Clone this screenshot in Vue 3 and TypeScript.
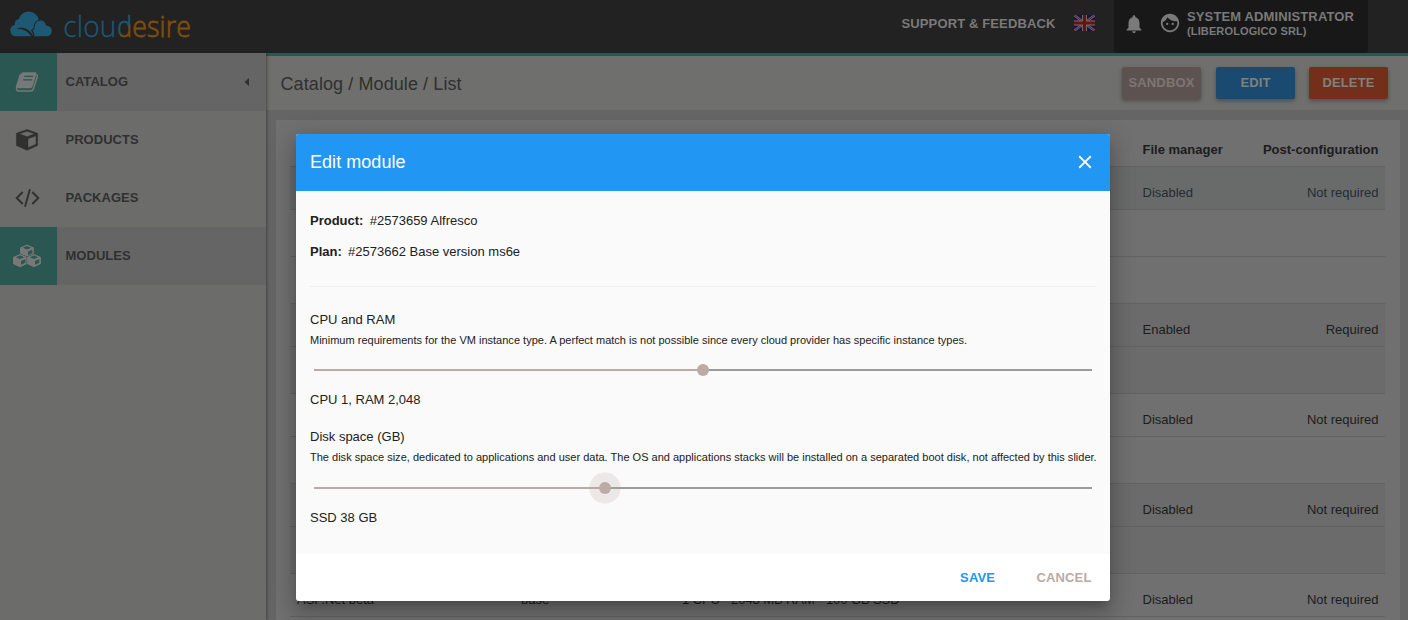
<script setup lang="ts">
import { computed, ref } from 'vue'

interface NavItem { label: string; icon: string; active: boolean; parent?: boolean }
interface Row { kind: 'main' | 'extra'; tone: string; cells?: string[] }
interface Slider { title: string; hint: string; value: string; percent: number; focused: boolean }

const nav: NavItem[] = [
  { label: 'CATALOG', icon: 'book', active: true, parent: true },
  { label: 'PRODUCTS', icon: 'cube', active: false },
  { label: 'PACKAGES', icon: 'code', active: false },
  { label: 'MODULES', icon: 'cubes', active: true },
]

const rows: Row[] = [
  { kind: 'main', tone: 'selected', cells: ['', '', '', 'Disabled', 'Not required'] },
  { kind: 'extra', tone: 'plain' },
  { kind: 'extra', tone: 'plain' },
  { kind: 'main', tone: 'striped', cells: ['', '', '', 'Enabled', 'Required'] },
  { kind: 'extra', tone: 'striped' },
  { kind: 'main', tone: 'plain', cells: ['', '', '', 'Disabled', 'Not required'] },
  { kind: 'extra', tone: 'plain' },
  { kind: 'main', tone: 'striped', cells: ['', '', '', 'Disabled', 'Not required'] },
  { kind: 'extra', tone: 'striped' },
  { kind: 'main', tone: 'plain', cells: ['ASP.Net beta', 'base', '1 CPU - 2048 MB RAM - 100 GB SSD', 'Disabled', 'Not required'] },
  { kind: 'extra', tone: 'plain' },
]

const open = ref(true)
const sliders = ref<Slider[]>([
  {
    title: 'CPU and RAM',
    hint: 'Minimum requirements for the VM instance type. A perfect match is not possible since every cloud provider has specific instance types.',
    value: 'CPU 1, RAM 2,048',
    percent: 50,
    focused: false,
  },
  {
    title: 'Disk space (GB)',
    hint: 'The disk space size, dedicated to applications and user data. The OS and applications stacks will be installed on a separated boot disk, not affected by this slider.',
    value: 'SSD 38 GB',
    percent: 37.4,
    focused: true,
  },
])
const facts = computed(() => [
  { key: 'Product:', text: '#2573659 Alfresco' },
  { key: 'Plan:', text: '#2573662 Base version ms6e' },
])
</script>

<template>
  <div class="app">
    <header class="topbar">
      <svg class="logo" width="200" height="53" viewBox="0 0 200 53">
        <defs>
          <linearGradient id="dTone" gradientUnits="userSpaceOnUse" x1="121.500" y1="26" x2="128.500" y2="33">
            <stop offset="0.5" stop-color="#1d5875" />
            <stop offset="0.5" stop-color="#7c4d0e" />
          </linearGradient>
        </defs>
        <path fill="#1d5875" d="M16 36.500a6 6 0 0 1-1.200-11.800 4.800 4.800 0 0 1 4-5.600 10.200 10.200 0 0 1 19.900 .9l-3 16.500z" />
        <path fill="#222" d="M16.500 28.700c5.500-2 12.500-1.200 17.500 8.500h-2.300c-2.500-5.300-8-8.500-15.200-8.500z" />
        <path fill="#1d5875" stroke="#222" stroke-width="2.200" paint-order="stroke" d="M34.300 36.500c.2-3-.3-4-1.800-6 .8-.6 1.300-1.200 2-2-.2-4.500 2.500-8 6-8 3.200 0 5.200 2.200 5.500 5 3.400.2 5.800 2.300 5.800 5.500s-2.600 5.500-5.700 5.500z" />
        <rect x="8" y="36.500" width="46" height="3" fill="#222" />
        <g font-family="'Open Sans', 'Noto Sans', sans-serif" font-size="29" font-weight="300">
          <text x="63.300" y="36.500" textLength="53" lengthAdjust="spacingAndGlyphs" fill="#1d5875" stroke="#1d5875" stroke-width="0.300">clou</text>
          <text x="117.200" y="36.500" textLength="14.800" lengthAdjust="spacingAndGlyphs" fill="url(#dTone)" stroke="url(#dTone)" stroke-width="0.700">d</text>
          <text x="132.300" y="36.500" textLength="58.700" lengthAdjust="spacingAndGlyphs" fill="#7c4d0e" stroke="#7c4d0e" stroke-width="0.800">esire</text>
        </g>
      </svg>
      <span class="support">SUPPORT &amp; FEEDBACK</span>
      <svg class="flag" width="21" height="16" viewBox="0 0 21 16">
        <rect width="21" height="16" fill="#15154a" />
        <path d="M0 0l21 16M21 0L0 16" stroke="#6c6c74" stroke-width="2.400" />
        <path d="M0 0l21 16M21 0L0 16" stroke="#6a1a20" stroke-width="1" />
        <path d="M10.500 0v16M0 8h21" stroke="#707070" stroke-width="5" />
        <path d="M10.500 0v16M0 8h21" stroke="#6a1212" stroke-width="3.200" />
      </svg>
      <div class="account">
        <svg class="bell" width="22" height="22" viewBox="0 0 24 24"><path d="M12 22c1.100 0 2-.9 2-2h-4c0 1.100.89 2 2 2zm6-6v-5c0-3.070-1.640-5.640-4.500-6.320V4c0-.83-.67-1.500-1.500-1.500s-1.500.67-1.500 1.500v.68C7.630 5.360 6 7.920 6 11v5l-2 2v1h16v-1l-2-2z" /></svg>
        <svg class="face" width="22" height="22" viewBox="0 0 24 24"><path d="M9 11.750c-.69 0-1.250.56-1.250 1.250s.56 1.250 1.250 1.250 1.250-.56 1.250-1.250-.56-1.250-1.250-1.250zm6 0c-.69 0-1.250.56-1.250 1.250s.56 1.250 1.250 1.250 1.250-.56 1.250-1.250-.56-1.250-1.250-1.250zM12 2C6.480 2 2 6.480 2 12s4.480 10 10 10 10-4.480 10-10S17.520 2 12 2zm0 18c-4.410 0-8-3.590-8-8 0-.29.02-.58.05-.86 2.360-1.050 4.230-2.980 5.210-5.370C11.070 8.330 14.050 10 17.420 10c.78 0 1.530-.09 2.250-.26.21.71.33 1.470.33 2.260 0 4.410-3.590 8-8 8z" /></svg>
        <div class="who">
          <span class="name">SYSTEM ADMINISTRATOR</span>
          <span class="org">(LIBEROLOGICO SRL)</span>
        </div>
      </div>
    </header>

    <div class="body">
      <nav class="sidebar">
        <a v-for="item in nav" :key="item.label" class="nav-item" :class="{ active: item.active }">
          <span class="nav-icon">
            <svg v-if="item.icon === 'book'" width="24" height="22" viewBox="0 0 24 22">
              <path fill="#787878" d="M8 1.300h12.200q1.800 0 1.300 1.700l-4 12.500q-.6 1.700-2.300 1.700H3.300q-1.800 0-1.300-1.600L6 3q.5-1.700 2-1.700z" />
              <path fill="none" stroke="#787878" stroke-width="1.500" stroke-linejoin="round" d="M5.500 3L1.700 15.500q-1 4.500 2 4.500h12q2 0 2.600-2l4-12.500q.3-1.200-.6-2" />
              <path stroke="#2a5752" stroke-width="1.300" d="M9.300 5.400h9M8.200 8.800h9" />
            </svg>
            <svg v-else-if="item.icon === 'cube'" class="cube" width="24" height="22" viewBox="0 0 24 22">
              <path fill="#303030" fill-rule="evenodd" stroke="#303030" stroke-width=".5" stroke-linejoin="round" d="M12 .5l10.600 3.800v12.200L12 21.300 1.400 16.500V4.300zM4.300 4.800L12 7.800l7.700-3L12 2.200zM13 9.800v9l8-3.600V6.700z" />
            </svg>
            <svg v-else-if="item.icon === 'code'" class="code" width="26" height="20" viewBox="0 0 26 20">
              <path fill="none" stroke="#303030" stroke-width="1.900" d="M8.700 4L2.700 10l6 6M18.300 4l6 6-6 6M15.900 1.300L11 18.700" />
            </svg>
            <svg v-else class="cubes" width="30" height="24" viewBox="0 0 30 24">
              <g v-for="(p, i) in ['translate(8.300 .5)', 'translate(1.300 10)', 'translate(15.300 10)']" :key="i" :transform="p">
                <path fill="#787878" stroke="#2a5752" stroke-width="1" paint-order="stroke" stroke-linejoin="round" d="M6.700 0l6.900 2.900v7L6.700 13.200 -.2 9.900V2.900z" />
                <path fill="#2a5752" d="M6.700 1.500l4.200 1.700-4.200 1.700-4.200-1.700zM7.700 7l4.300-1.800v3.500l-4.300 2.100z" />
              </g>
            </svg>
          </span>
          <span class="nav-label">{{ item.label }}</span>
          <svg v-if="item.parent" class="caret" width="6" height="8" viewBox="0 0 6 8"><path d="M5 0v8L.5 4z" fill="#303030" /></svg>
        </a>
      </nav>

      <main class="main">
        <div class="toolbar">
          <h1>Catalog / Module / List</h1>
          <button class="btn sandbox">SANDBOX</button>
          <button class="btn edit">EDIT</button>
          <button class="btn delete">DELETE</button>
        </div>
        <section class="card">
          <div class="row head">
            <span></span><span></span><span></span><span>File manager</span><span class="last">Post-configuration</span>
          </div>
          <div v-for="(row, i) in rows" :key="i" class="row" :class="[row.kind, row.tone]">
            <span v-for="(cell, c) in row.cells ?? []" :key="c" :class="{ specs: c === 2, last: c === 4 }">{{ cell }}</span>
          </div>
        </section>
      </main>
    </div>

    <div v-if="open" class="dialog" role="dialog">
      <div class="dialog-head">
        <h2>Edit module</h2>
        <svg class="close" width="22" height="22" viewBox="0 0 24 24" @click="open = false"><path d="M19 6.410L17.590 5 12 10.590 6.410 5 5 6.410 10.590 12 5 17.590 6.410 19 12 13.410 17.590 19 19 17.590 13.410 12z" fill="#fff" /></svg>
      </div>
      <div class="dialog-body">
        <p v-for="f in facts" :key="f.key" class="fact"><b>{{ f.key }}</b>{{ f.text }}</p>
        <hr />
        <div v-for="s in sliders" :key="s.title" class="field">
          <div class="field-title">{{ s.title }}</div>
          <div class="hint">{{ s.hint }}</div>
          <div class="slider">
            <div class="track"><div class="fill" :style="{ width: s.percent + '%' }"></div></div>
            <div class="thumb" :class="{ focused: s.focused }" :style="{ left: s.percent + '%' }"></div>
          </div>
          <div class="value">{{ s.value }}</div>
        </div>
      </div>
      <div class="dialog-foot">
        <button class="flat save">SAVE</button>
        <button class="flat cancel">CANCEL</button>
      </div>
    </div>
  </div>
</template>

<style>
body { margin: 0; overflow: hidden; }
</style>

<style scoped>
.app {
  position: relative;
  width: 1408px;
  height: 620px;
  overflow: hidden;
  background: #656565;
  font-family: 'Liberation Sans', Arial, sans-serif;
  font-size: 13px;
  color: #1c1c1c;
  white-space: nowrap;
}
.app * { box-sizing: border-box; }
h1, h2, p { margin: 0; font-weight: 400; }
button { border: 0; padding: 0; font: inherit; font-weight: 700; letter-spacing: 0.13px; }
svg { display: block; flex: none; }

.topbar { display: flex; height: 53px; background: #222; color: #7a7a7a; font-weight: 700; letter-spacing: 0.13px; }
.support { margin-left: auto; line-height: 47px; }
.flag { margin: 15px 19px 0 18.500px; }
.account { display: flex; width: 254px; margin-right: 40px; background: #181818; border-radius: 0 0 3px 3px; fill: #7a7a7a; }
.bell { margin: 13px 0 0 9px; }
.face { margin: 12px 0 0 13.500px; }
.who { display: flex; flex-direction: column; margin: 9px 0 0 6.500px; }
.name { line-height: 15px; }
.org { font-size: 11px; line-height: 14px; }

.body { display: flex; height: 567px; }
.sidebar { position: relative; z-index: 1; width: 266px; background: #6c6c6a; box-shadow: 1px 0 3px rgba(0, 0, 0, 0.35); }
.nav-item { display: flex; height: 58px; align-items: center; color: #303030; font-weight: 700; letter-spacing: 0.03px; }
.nav-item.active { background: #656565; }
.nav-icon { display: flex; width: 57px; height: 58px; padding-right: 3px; align-items: center; justify-content: center; }
.cube { margin: 0 1px 0 0; }
.code { margin-top: 0; }
.cubes { margin-right: 1px; }
.active .nav-icon { background: #2a5752; }
.nav-label { margin: -2px 0 0 8.500px; }
.caret { margin-left: auto; margin-top: -1px; margin-right: 16.500px; }

.main { flex: 1; border-top: 3px solid #2a5752; }
.toolbar { display: flex; align-items: flex-start; height: 54px; padding: 11px 20px 0 14.500px; background: #6f6f6d; }
h1 { margin-right: auto; font-size: 18px; line-height: 34px; letter-spacing: 0.09px; color: #303030; }
.btn { height: 32px; padding-bottom: 1px; border-radius: 2px; color: #808080; text-align: center; box-shadow: 0 2px 4px rgba(0, 0, 0, 0.3); }
.sandbox { width: 79px; background: #5d5250; color: #7d7674; }
.edit { width: 79px; margin-left: 15px; background: #1a4a70; }
.delete { width: 79px; margin-left: 14px; background: #742f1a; }

.card { height: 520px; margin: 10px 8px 0 10px; padding: 3px 15px 0 14px; background: #707070; }
.row { display: grid; grid-template-columns: 224px 161px 460.500px 100px 1fr; height: 43px; padding: 18px 6.500px 0 7px; border-top: 1px solid #626262; line-height: 15px; }
.row.head { border-top-color: transparent; font-weight: 700; }
.row.extra { height: 47px; }
.selected { background: #686b6a; color: #262b31; }
.striped { background: #6b6b6b; }
.specs { letter-spacing: -0.09px; }
.last { text-align: right; }

.dialog {
  position: absolute;
  z-index: 5;
  left: 296px;
  top: 134px;
  width: 814px;
  height: 467px;
  display: flex;
  flex-direction: column;
  border-radius: 3px;
  overflow: hidden;
  background: #fff;
  color: #212121;
  box-shadow: 0 7px 8px -4px rgba(0, 0, 0, 0.2), 0 13px 19px 2px rgba(0, 0, 0, 0.14), 0 5px 24px 4px rgba(0, 0, 0, 0.12);
}
.dialog-head { display: flex; align-items: center; justify-content: space-between; height: 57px; padding: 0 14px; background: #2196f3; color: #fff; }
h2 { font-size: 18px; line-height: 24px; letter-spacing: 0.05px; margin-top: -2px; }
.close { margin-top: -1px; }
.dialog-body { height: 363px; padding: 22px 14px 0; background: #fafafa; }
.fact { height: 31px; line-height: 16px; }
.fact b { margin-right: 6.300px; }
hr { height: 1px; margin: 11px 0 25px; border: 0; background: #eee; }
.field { height: 117px; }
.field-title { line-height: 16px; }
.hint { margin-top: 6px; font-size: 11px; line-height: 13px; letter-spacing: 0.008px; }
.slider { position: relative; height: 2px; margin: 22px 4px 21px; }
.field + .field .slider { margin-top: 23px; }
.track { height: 2px; background: #9b9b9b; }
.fill { height: 2px; background: #bcaaa4; }
.thumb { position: absolute; top: -5px; width: 12px; height: 12px; margin-left: -6px; border-radius: 50%; background: #bcaaa4; }
.thumb.focused { box-shadow: 0 0 0 9.500px rgba(188, 170, 164, 0.22); }
.value { line-height: 16px; }
.dialog-foot { display: flex; justify-content: flex-end; height: 47px; padding: 0 18.500px 0 0; }
.flat { background: none; }
.save { color: #2196f3; margin-right: 41.500px; }
.cancel { color: #bcaaa4; }
</style>
